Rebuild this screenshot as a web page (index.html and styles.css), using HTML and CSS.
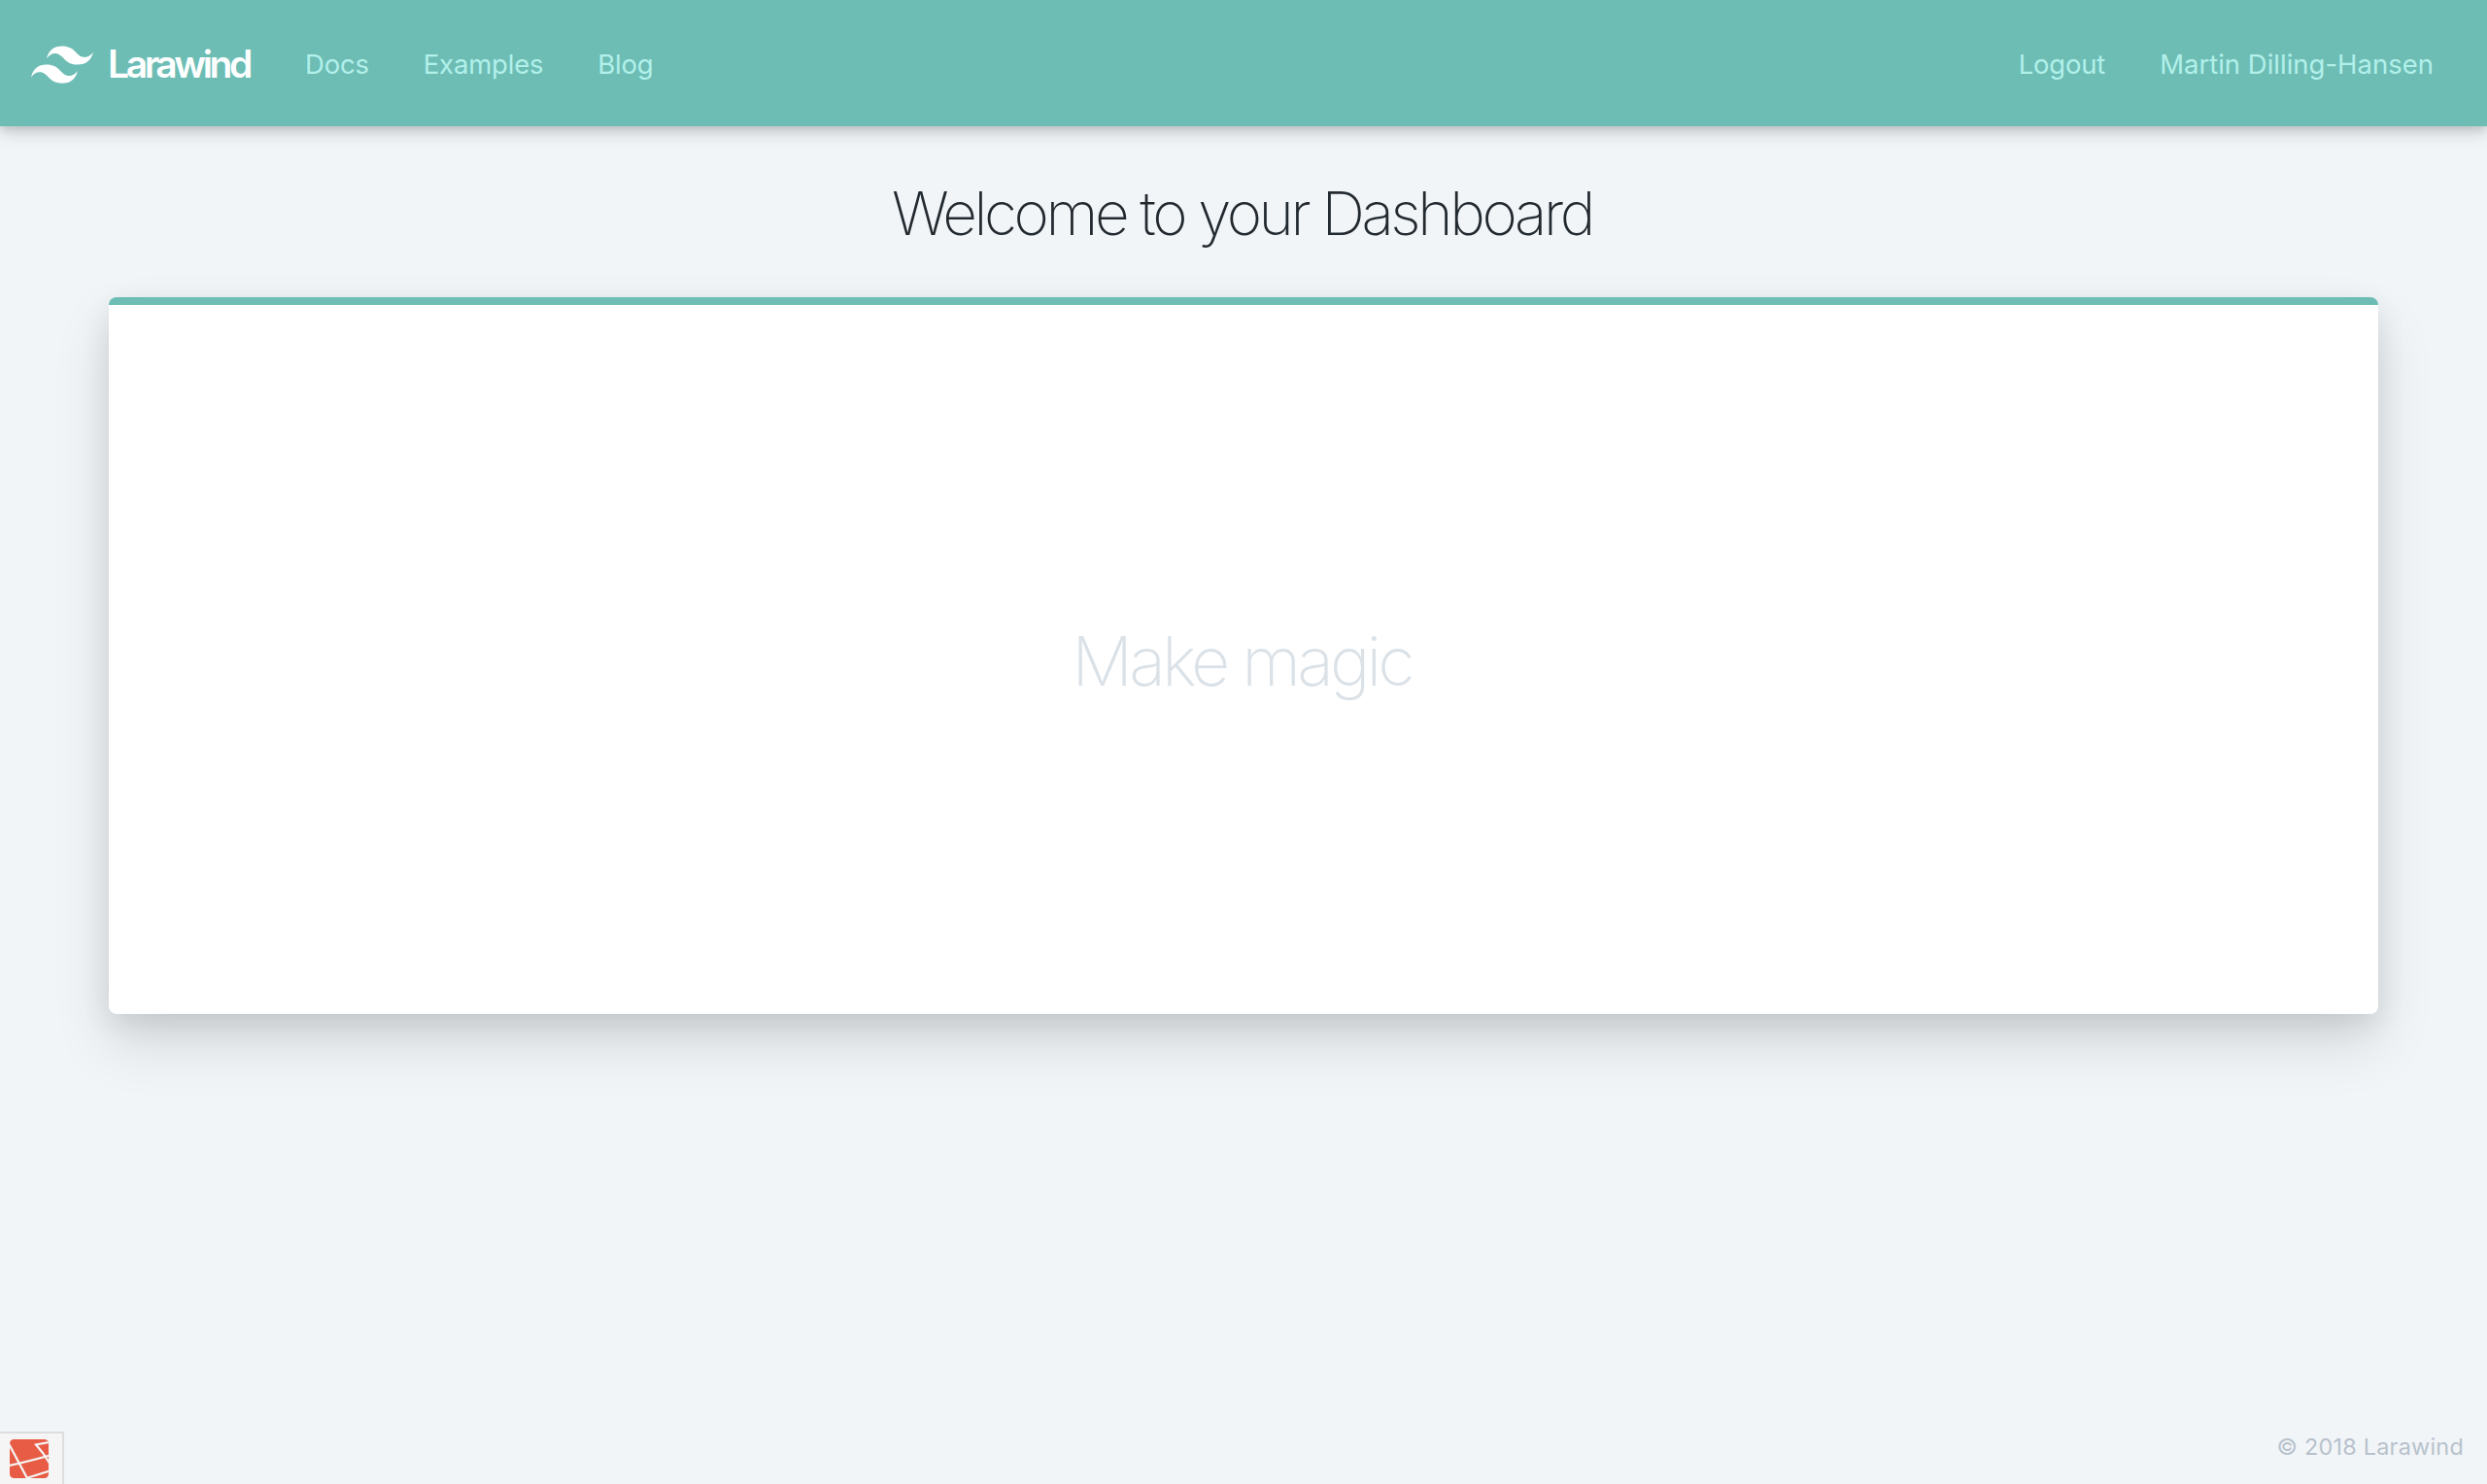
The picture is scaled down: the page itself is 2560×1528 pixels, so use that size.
FILE: index.html
```
<!DOCTYPE html>
<html lang="en">
<head>
<meta charset="utf-8">
<title>Larawind</title>
<link rel="stylesheet" href="styles.css">
</head>
<body>
<header class="navbar">
  <a class="brand">
    <svg class="brand-mark" viewBox="0 0 54 54" fill="currentColor" aria-hidden="true"><path d="M13.5 22.1c1.8-7.2 6.3-10.8 13.5-10.8 10.8 0 12.15 8.1 17.55 9.45 3.6.9 6.75-.45 9.45-4.05-1.8 7.2-6.3 10.8-13.5 10.8-10.8 0-12.15-8.1-17.55-9.45-3.6-.9-6.75.45-9.45 4.05zM0 38.3c1.8-7.2 6.3-10.8 13.5-10.8 10.8 0 12.15 8.1 17.55 9.45 3.6.9 6.75-.45 9.45-4.05-1.8 7.2-6.3 10.8-13.5 10.8-10.8 0-12.15-8.1-17.55-9.45-3.6-.9-6.75.45-9.45 4.05z"/></svg>
    <span class="brand-name">Larawind</span>
  </a>
  <nav class="links">
    <a class="link">Docs</a>
    <a class="link">Examples</a>
    <a class="link">Blog</a>
  </nav>
  <nav class="links links-user">
    <a class="link">Logout</a>
    <a class="link link-name">Martin Dilling-Hansen</a>
  </nav>
</header>
<main class="page">
  <h1 class="title">Welcome to your Dashboard</h1>
  <section class="card">
    <p class="placeholder">Make magic</p>
  </section>
</main>
<footer class="footer">© 2018 Larawind</footer>
<a class="debugbar" aria-label="Debug bar">
  <svg class="debugbar-icon" viewBox="0 0 40 40" aria-hidden="true">
    <clipPath id="tile"><rect width="40" height="40" rx="4.5"/></clipPath>
    <g clip-path="url(#tile)">
      <rect width="40" height="40" fill="#e85c45"/>
      <path d="M-1 4.5Q2 10 18.500 41M-1 27Q18 23 41 16.500M41 3L27 5.500L34 14L41 24.500M17 40L41 32.500" fill="none" stroke="#f5f5f5" stroke-width="2.200"/>
    </g>
  </svg>
</a>
</body>
</html>
```
FILE: styles.css
```
* {
  box-sizing: border-box;
}

body {
  margin: 0;
  min-height: 100vh;
  display: flex;
  flex-direction: column;
  background: #f1f5f8;
  color: #22292f;
  font-family: Inter, "Liberation Sans", sans-serif;
}

.navbar {
  display: flex;
  align-items: center;
  height: 130px;
  padding: 0 55px 0 32px;
  background: #6dbdb5;
  box-shadow: 0 8px 16px rgba(0, 0, 0, .13), 0 4px 8px rgba(0, 0, 0, .1);
}

.brand {
  display: flex;
  align-items: center;
  gap: 15px;
  width: 282px;
  padding-top: 2px;
  color: #fff;
}

.brand-mark {
  width: 64px;
  height: 64px;
}

.brand-name {
  font-size: 39px;
  font-weight: 600;
  line-height: 48px;
  letter-spacing: -3.4px;
}

.links {
  display: flex;
  gap: 56px;
  padding-top: 2px;
}

.links-user {
  margin-left: auto;
}

.link {
  color: #b2f0ea;
  font-size: 27.5px;
  line-height: 40px;
  letter-spacing: -.2px;
}

.link-name {
  letter-spacing: 0;
}

.page {
  flex: 1;
  padding: 57px 112px 0;
}

.title {
  margin: 0 0 53px;
  padding-right: 3px;
  font-size: 62px;
  font-weight: 200;
  line-height: 66px;
  letter-spacing: -3.4px;
  text-align: center;
}

.card {
  display: flex;
  align-items: center;
  justify-content: center;
  height: 738px;
  border-top: 8px solid #6dbdb5;
  border-radius: 8px;
  background: #fff;
  box-shadow: 0 30px 60px rgba(0, 0, 0, .12), 0 10px 30px rgba(0, 0, 0, .09);
}

.placeholder {
  margin: 0;
  padding: 3px 4px 0 0;
  color: #dae1e7;
  font-size: 70px;
  font-weight: 150;
  line-height: 80px;
  letter-spacing: -3.9px;
}

.footer {
  padding: 0 24px 22px;
  color: #b8c2cc;
  font-size: 23.5px;
  line-height: 32px;
  letter-spacing: .19px;
  text-align: right;
}

.debugbar {
  position: fixed;
  left: 0;
  bottom: 0;
  width: 66px;
  height: 54px;
  padding: 6px 0 0 10px;
  border: solid #ddd;
  border-width: 2px 2px 0 0;
  background: #f5f5f5;
}

.debugbar-icon {
  display: block;
  width: 40px;
  height: 40px;
}
```
